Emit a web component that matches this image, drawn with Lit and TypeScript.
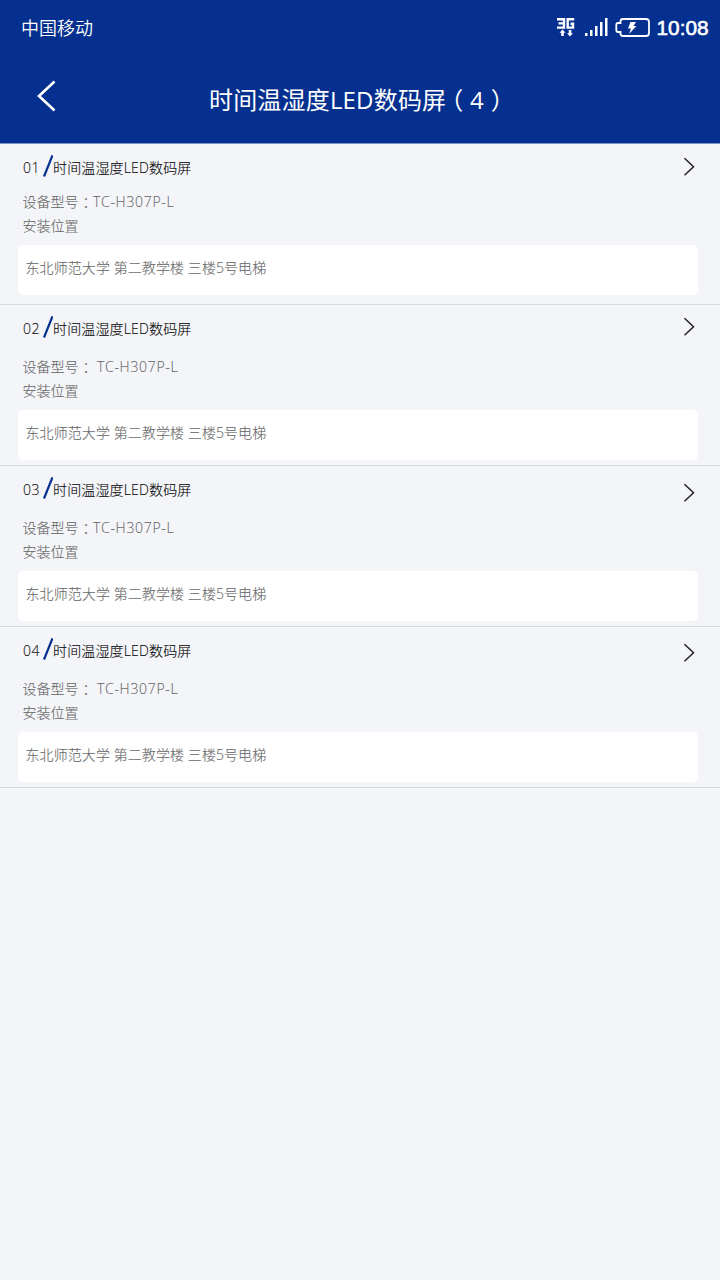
import { LitElement, html, css, svg } from "lit";
import { customElement, property } from "lit/decorators.js";

interface Device {
  no: string;
  name: string;
  model: string;
  spaced: boolean;
  arrowTop: number;
}

const NAME = "时间温湿度LED数码屏";

const DEVICES: Device[] = [
  { no: "01", name: NAME, model: "TC-H307P-L", spaced: false, arrowTop: 13 },
  { no: "02", name: NAME, model: "TC-H307P-L", spaced: true, arrowTop: 12 },
  { no: "03", name: NAME, model: "TC-H307P-L", spaced: false, arrowTop: 17 },
  { no: "04", name: NAME, model: "TC-H307P-L", spaced: true, arrowTop: 16 },
];

@customElement("status-bar")
class StatusBar extends LitElement {
  static styles = css`
    :host {
      display: flex;
      justify-content: space-between;
      align-items: center;
      height: 56px;
      padding: 0 11px 0 21px;
      box-sizing: border-box;
      color: #fff;
    }
    .carrier {
      font-size: 18px;
      font-weight: 350;
      line-height: 56px;
    }
    .right {
      display: flex;
      align-items: center;
    }
    svg {
      display: block;
    }
    .time {
      font: 400 20.800px/54px "Liberation Sans", sans-serif;
      -webkit-text-stroke: 0.6px #fff;
      margin-left: 6.500px;
      width: 52.500px;
      white-space: nowrap;
    }
  `;
  render() {
    return html`
      <span class="carrier">中国移动</span>
      <div class="right">
        <svg width="94" height="56" viewBox="556 0 94 56" fill="none" stroke="#fff">
          <path stroke-width="2.400" d="M557 19.200H564V27.600H557M558.500 23.400H564M574.200 19.200H567.700V27.600H573V23.800H570.500" />
          <path fill="#fff" stroke="none" d="M562.500 29.500l3 3.200h-1.700v3.300h-2.600v-3.300h-1.700zM570 36.500l-3-3.200h1.700v-3.300h2.600v3.300h1.700z" />
          ${[
            [585, 33],
            [590, 30],
            [595, 26],
            [600, 22],
            [605, 18],
          ].map(([x, y]) => svg`<rect x=${x} y=${y} width="2.500" height=${36 - y} fill="#fff" stroke="none" />`)}
          <path stroke-width="1.800" d="M623 19H646Q649 19 649 22V33Q649 36 646 36H623Q620.500 36 620.500 33.500V32H618Q616.300 32 616.300 30V25Q616.300 23 618 23H620.500V21.500Q620.500 19 623 19Z" />
          <path fill="#fff" stroke="none" d="M630.500 22H636L633.500 26H636.500L629 34L631 28.500H628Z" />
        </svg>
        <span class="time">10:08</span>
      </div>
    `;
  }
}

@customElement("device-item")
class DeviceItem extends LitElement {
  @property({ attribute: false }) device!: Device;
  @property({ type: Boolean, reflect: true }) compact = false;

  static styles = css`
    :host {
      display: flex;
      flex-direction: column;
      height: 161px;
      box-sizing: border-box;
      border-bottom: 1px solid #d9dade;
      font-size: 14px;
      color: #6a6a6a;
      -webkit-text-stroke: 0.12px currentColor;
    }
    .head {
      display: flex;
      height: 50px;
      padding: 0 25px 0 23px;
      color: #0c0c0c;
    }
    :host([compact]) .head {
      height: 46px;
    }
    .no {
      width: 20px;
      line-height: 48px;
      letter-spacing: 0.4px;
    }
    .slash {
      display: block;
      margin-top: 11px;
    }
    .name {
      line-height: 48px;
      flex: 1;
      white-space: nowrap;
      letter-spacing: 0.15px;
    }
    .arrow {
      display: block;
    }
    .line {
      height: 24px;
      line-height: 24px;
      padding-left: 22.6px;
      white-space: pre;
    }
    .colon {
      font-feature-settings: "halt";
      margin: 0 3.400px 0 4px;
    }
    .model {
      letter-spacing: 0.7px;
    }
    .model.spaced {
      margin-left: 4px;
    }
    .place {
      height: 50px;
      margin: 7px 22px 0 18px;
      padding-left: 7.500px;
      border-radius: 5px;
      background: #fff;
      line-height: 46px;
      letter-spacing: 0.08px;
      box-sizing: border-box;
      white-space: pre;
    }
  `;

  render() {
    const d = this.device;
    return html`
      <div class="head">
        <span class="no">${d.no}</span>
        <svg class="slash" width="10" height="22" viewBox="0 0 10 22">
          <path d="M1 21.500L9.500 0.300" stroke="#05308f" stroke-width="2.200" />
        </svg>
        <span class="name">${d.name}</span>
        <svg class="arrow" style="margin-top:${d.arrowTop}px" width="12" height="20" viewBox="0 0 12 20">
          <path d="M1.500 1.300L10.500 9.800L1.500 18.300" fill="none" stroke="#222" stroke-width="1.500" />
        </svg>
      </div>
      <div class="line">设备型号<span class="colon">：</span><span class="model ${d.spaced ? "spaced" : ""}">${d.model}</span></div>
      <div class="line">安装位置</div>
      <div class="place">东北师范大学 第二教学楼 三楼5号电梯</div>
    `;
  }
}

@customElement("app-root")
class AppRoot extends LitElement {
  static styles = css`
    :host {
      display: block;
      min-height: 1280px;
      background: #f4f5f9;
      font-family: "Open Sans", "Noto Sans CJK SC", sans-serif;
      font-weight: 300;
    }
    .header {
      height: 144px;
      box-sizing: border-box;
      background: #05308f;
      border-bottom: 1px solid #7e95c6;
      color: #fff;
    }
    .nav {
      display: flex;
      height: 87px;
      padding-left: 36px;
    }
    .back {
      display: block;
      margin-top: 24px;
    }
    .title {
      margin: 0 0 0 153px;
      font-size: 24px;
      font-weight: 400;
      letter-spacing: 0.18px;
      line-height: 88px;
      white-space: nowrap;
    }
    .open {
      font-feature-settings: "halt";
      margin: 0 6.500px 0 5px;
    }
    .close {
      font-feature-settings: "halt";
      margin-left: 7px;
    }
  `;
  render() {
    return html`
      <div class="header">
        <status-bar></status-bar>
        <div class="nav">
          <svg class="back" width="20" height="32" viewBox="0 0 20 32">
            <path d="M18.500 1.500L3 16L18.500 30.500" fill="none" stroke="#fff" stroke-width="2.600" />
          </svg>
          <h1 class="title">时间温湿度LED数码屏<span class="open">（</span>4<span class="close">）</span></h1>
        </div>
      </div>
      ${DEVICES.map((d, i) => html`<device-item .device=${d} ?compact=${i === 0}></device-item>`)}
    `;
  }
}
